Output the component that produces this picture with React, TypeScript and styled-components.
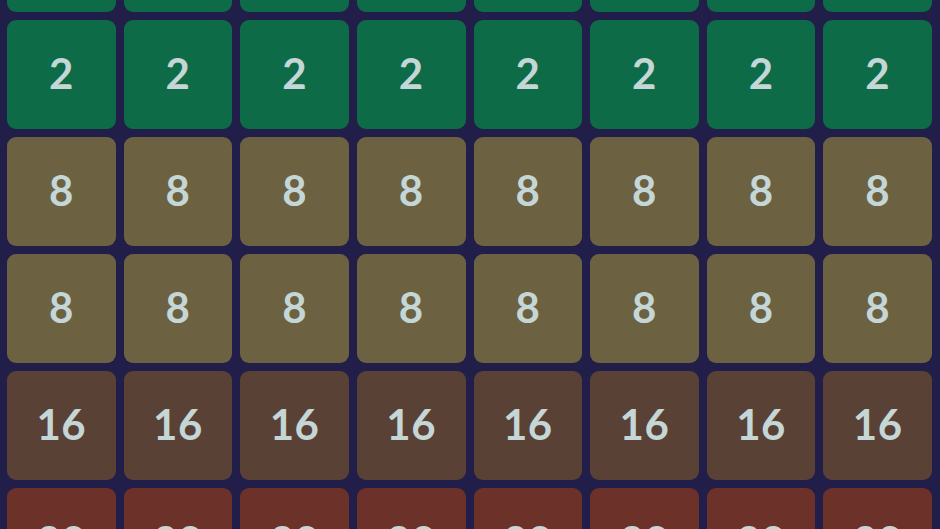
import styled, { createGlobalStyle } from "styled-components";

const GlobalStyle = createGlobalStyle`
	html, body {
		margin: 0;
		padding: 0;
		background: #221e4a;
		overflow: hidden;
	}
`;

type Tone = "green" | "olive" | "brown" | "rust";

const tones: Record<Tone, string> = {
	green: "#0e6b47",
	olive: "#6c6242",
	brown: "#5a4136",
	rust: "#6c3229",
};

const Board = styled.div`
	display: grid;
	grid-template-columns: repeat(8, 1fr);
	grid-auto-rows: 109px;
	gap: 8px;
	padding: 0 8px 0 7px;
	margin-top: -97px;
	height: 640px;
	background: #221e4a;
	font-family: "Lato", "Open Sans", sans-serif;
`;

const Tile = styled.div<{ $tone: Tone }>`
	display: flex;
	align-items: center;
	justify-content: center;
	padding-bottom: 4px;
	border-radius: 9px;
	background: ${(p) => tones[p.$tone]};
	color: #c5d6d6;
	font-size: 42px;
	font-weight: 700;
	letter-spacing: 0.5px;
`;

const rows: { value: number; tone: Tone }[] = [
	{ value: 2, tone: "green" },
	{ value: 2, tone: "green" },
	{ value: 8, tone: "olive" },
	{ value: 8, tone: "olive" },
	{ value: 16, tone: "brown" },
	{ value: 32, tone: "rust" },
];

export default function App(): JSX.Element {
	return (
		<>
			<GlobalStyle />
			<Board>
				{rows.map((row, r) =>
					Array.from({ length: 8 }).map((_, c) => (
						<Tile key={`${r}-${c}`} $tone={row.tone}>
							{row.value}
						</Tile>
					))
				)}
			</Board>
		</>
	);
}
